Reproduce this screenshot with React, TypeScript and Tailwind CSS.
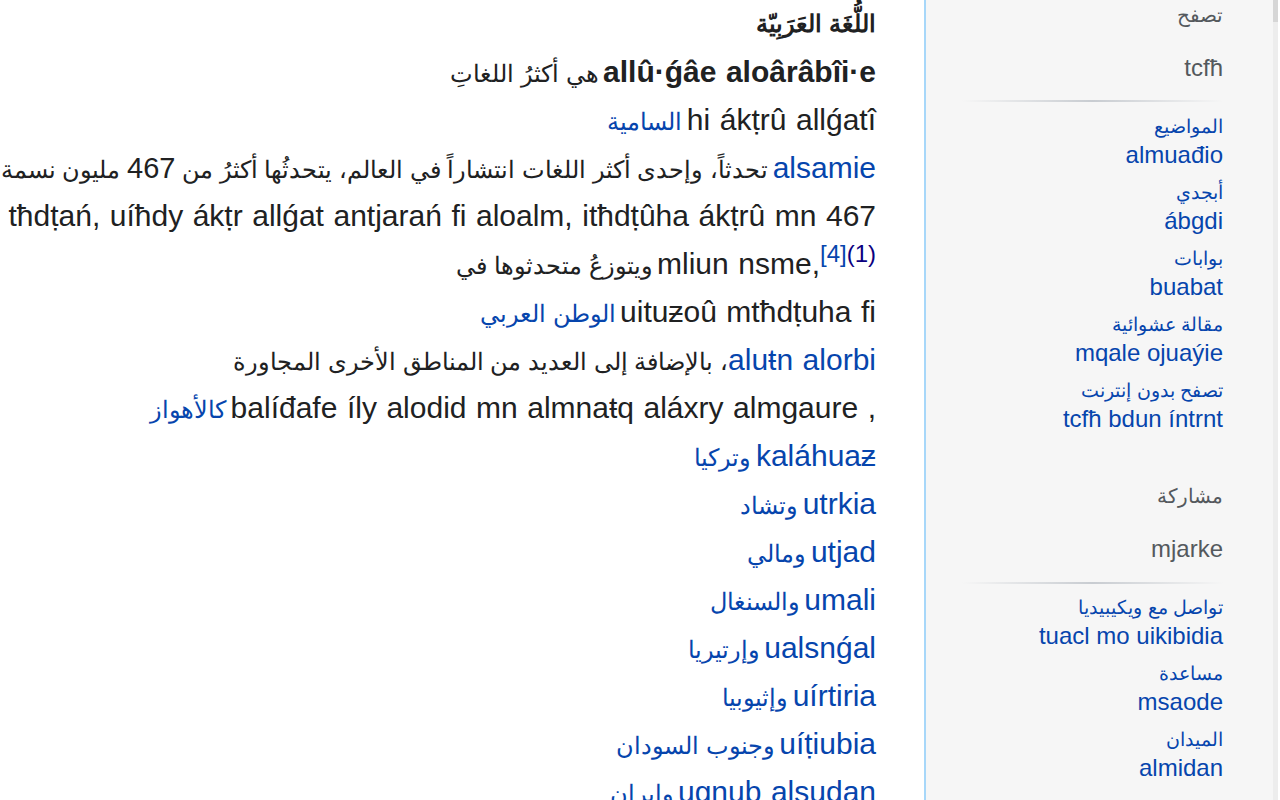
import React from "react";

const link = "text-[#0645ad]";

// one rendered line of the article, right aligned, never wrapping
const Line = ({ children }: { children: React.ReactNode }) => (
  <div dir="rtl" className="h-[48px] leading-[48px] whitespace-nowrap text-right">
    {children}
  </div>
);

const Ar = ({ children, className = "" }: { children: React.ReactNode; className?: string }) => (
  <span className={`text-[24px] ${className}`}>{children}</span>
);

const Lt = ({ children, className = "" }: { children: React.ReactNode; className?: string }) => (
  <span dir="ltr" className={`text-[30px] [word-spacing:1.2px] ${className}`}>{children}</span>
);

const Separator = ({ className = "" }: { className?: string }) => (
  <div className={`h-[2px] ml-[36px] bg-gradient-to-r from-transparent via-[#c8ccd1] to-transparent ${className}`} />
);

const SideItem = ({ ar, lt, first }: { ar: string; lt: string; first?: boolean }) => (
  <div className={first ? "" : "mt-[10px]"}>
    <div className="h-[28px] leading-[28px] text-[19px] text-[#0645ad]">{ar}</div>
    <div className="h-[28px] leading-[28px] text-[24px] text-[#0645ad]">{lt}</div>
  </div>
);

export default function App() {
  return (
    <div className="flex h-[800px] w-[1280px] overflow-hidden bg-white font-['Liberation_Sans',sans-serif] text-[#202122]">
      {/* article */}
      <main className="w-[924px] shrink-0 overflow-hidden pr-[48px]">
        <Line>
          <Ar className="font-bold">اللُّغَة العَرَبِيّة</Ar>
        </Line>
        <Line>
          <Lt className="font-bold">allû·ǵâe aloârâbîi·e</Lt> <Ar>هي أكثرُ اللغاتِ</Ar>
        </Line>
        <Line>
          <Lt>hi ákṭrû allǵatî</Lt> <Ar className={link}>السامية</Ar>
        </Line>
        <Line>
          <Lt className={link}>alsamie</Lt>{" "}
          <Ar>
            تحدثاً، وإحدى أكثر اللغات انتشاراً في العالم، يتحدثُها أكثرُ من <span className="text-[29px]">467</span> مليون نسمة
          </Ar>
        </Line>
        <Line>
          <Lt>tħdṭań, uíħdy ákṭr allǵat antjarań fi aloalm, itħdṭûha ákṭrû mn 467</Lt>
        </Line>
        <Line>
          <Lt>
            mliun nsme,
            <sup className="text-[24px] text-[#0645ad]">[4]</sup>
            <sup className="text-[24px] text-[#0b0080]">(1)</sup>
          </Lt>{" "}
          <Ar>ويتوزعُ متحدثوها في</Ar>
        </Line>
        <Line>
          <Lt>uituƶoû mtħdṭuha fi</Lt> <Ar className={link}>الوطن العربي</Ar>
        </Line>
        <Line>
          <Lt className={link}>aluŧn alorbi</Lt>
          <Ar>، بالإضافة إلى العديد من المناطق الأخرى المجاورة</Ar>
        </Line>
        <Line>
          <Lt>balíđafe íly alodid mn almnaŧq aláxry almgaure ,</Lt> <Ar className={link}>كالأهواز</Ar>
        </Line>
        <Line>
          <Lt className={link}>kaláhuaƶ</Lt> <Ar className={link}>وتركيا</Ar>
        </Line>
        <Line>
          <Lt className={link}>utrkia</Lt> <Ar className={link}>وتشاد</Ar>
        </Line>
        <Line>
          <Lt className={link}>utjad</Lt> <Ar className={link}>ومالي</Ar>
        </Line>
        <Line>
          <Lt className={link}>umali</Lt> <Ar className={link}>والسنغال</Ar>
        </Line>
        <Line>
          <Lt className={link}>ualsnǵal</Lt> <Ar className={link}>وإرتيريا</Ar>
        </Line>
        <Line>
          <Lt className={link}>uírtiria</Lt> <Ar className={link}>وإثيوبيا</Ar>
        </Line>
        <Line>
          <Lt className={link}>uíṭiubia</Lt> <Ar className={link}>وجنوب السودان</Ar>
        </Line>
        <Line>
          <Lt className={link}>ugnub alsudan</Lt> <Ar className={link}>وإيران</Ar>
        </Line>
      </main>

      {/* side panel */}
      <aside dir="rtl" className="w-[349px] shrink-0 border-l-2 border-[#a7d7f9] bg-[#f6f6f6] pr-[50px] text-right">
        <div className="h-[30px] leading-[30px] text-[20px] text-[#54595d]">تصفح</div>
        <div className="mt-[23px] h-[30px] leading-[30px] text-[24px] text-[#54595d]">tcfħ</div>
        <Separator className="mt-[17px]" />
        <div className="mt-[11px]">
          <SideItem first ar="المواضيع" lt="almuađio" />
          <SideItem ar="أبجدي" lt="ábgdi" />
          <SideItem ar="بوابات" lt="buabat" />
          <SideItem ar="مقالة عشوائية" lt="mqale ojuaýie" />
          <SideItem ar="تصفح بدون إنترنت" lt="tcfħ bdun íntrnt" />
        </div>
        <div className="mt-[49px] h-[28px] leading-[28px] text-[20px] text-[#54595d]">مشاركة</div>
        <div className="mt-[25px] h-[28px] leading-[28px] text-[24px] text-[#54595d]">mjarke</div>
        <Separator className="mt-[19px]" />
        <div className="mt-[10px]">
          <SideItem first ar="تواصل مع ويكيبيديا" lt="tuacl mo uikibidia" />
          <SideItem ar="مساعدة" lt="msaode" />
          <SideItem ar="الميدان" lt="almidan" />
        </div>
      </aside>

      {/* scrollbar strip */}
      <div className="w-[5px] shrink-0 bg-[#ededed]">
        <div className="h-[22px] bg-[#d6d6d6]" />
      </div>
    </div>
  );
}
